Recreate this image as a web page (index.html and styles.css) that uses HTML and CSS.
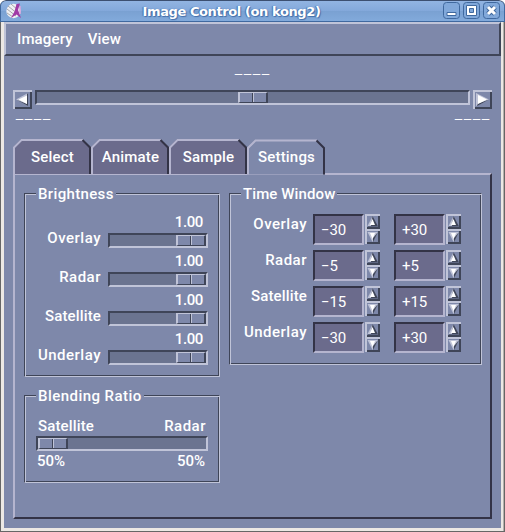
FILE: index.html
```html
<!DOCTYPE html>
<html lang="en">
<head>
<meta charset="utf-8">
<title>Image Control (on kong2)</title>
<link rel="stylesheet" href="styles.css">
</head>
<body>
<svg width="0" height="0" class="defs" aria-hidden="true">
  <symbol id="up" viewBox="0 0 15 15"><path d="M7.500 2L13 12.500H3z" fill="#3f4558"/><path d="M7.500 2L2.500 12H6z" fill="#c0c4d8"/><path d="M7.500 5L10 11H5z" fill="#fff"/></symbol>
  <symbol id="down" viewBox="0 0 15 15"><path d="M2.500 3H13L7.500 13z" fill="#c0c4d8"/><path d="M13 3L8 13V9z" fill="#3f4558"/><path d="M5 4h5L7.500 10z" fill="#fff"/></symbol>
  <symbol id="left" viewBox="0 0 19 19"><path d="M3 9.500L15 3v13z" fill="#c0c4d8"/><path d="M3 9.500L15 16V3.500h-1V14z" fill="#3f4558"/><path d="M5.500 9.500L14 5.500v8.500z" fill="#fff"/></symbol>
  <symbol id="right" viewBox="0 0 19 19"><path d="M3 3v13L16 9.500z" fill="#c0c4d8"/><path d="M4 16L16 9.500 5 13.500z" fill="#3f4558"/><path d="M5 5v9L14 9.500z" fill="#fff"/></symbol>
  <symbol id="tab" viewBox="0 0 78 35"><path class="face" d="M0 35V8L8 0h61l9 8v27z"/><path d="M1 35V8.500L8.500 1H70" fill="none" stroke="#b5b5cf" stroke-width="2"/><path d="M69.500 1l7.500 7.500V35" fill="none" stroke="#333346" stroke-width="2"/></symbol>
</svg>
<div class="window">
  <header class="titlebar">
    <svg class="logo" width="16" height="16" viewBox="0 0 16 16"><circle cx="7.500" cy="8" r="7.200" fill="#f0f0f4"/><path d="M1 6l9 7M2 3l10 8M5 1l7 6M1 10l6 4" stroke="#888" stroke-width=".7"/><path d="M10.500 1l3.500-.5-2 6.500 3 8-4.500-3.500L5 15l3.500-6.500z" fill="#a03aa6"/><path d="M14 3v8" stroke="#d9a3dc" stroke-width="1.500"/></svg>
    <h1>Image Control (on kong2)</h1>
    <div class="winbtns">
      <svg width="17" height="17" viewBox="0 0 17 17"><rect x=".5" y=".5" width="16" height="16" rx="3"/><path d="M4 10.500h9v3H4z" class="g"/></svg>
      <svg width="17" height="17" viewBox="0 0 17 17"><rect x=".5" y=".5" width="16" height="16" rx="3"/><path d="M3.500 3.500h10v10h-10zM6.500 6.500v4h4v-4z" class="g" fill-rule="evenodd"/></svg>
      <svg width="17" height="17" viewBox="0 0 17 17"><rect x=".5" y=".5" width="16" height="16" rx="3"/><path d="M5 5l7 7M12 5l-7 7" class="x1"/><path d="M5 5l7 7M12 5l-7 7" class="x2"/></svg>
    </div>
  </header>
  <main class="client">
    <nav class="menubar"><span class="imagery">Imagery</span><span class="view">View</span></nav>
    <div class="dash center">––––</div>
    <div class="scroll">
      <svg class="btn big"><use href="#left"/></svg>
      <div class="trough wide"><i class="thumb"></i></div>
      <svg class="btn big"><use href="#right"/></svg>
    </div>
    <div class="ends"><span class="dash">––––</span><span class="dash">––––</span></div>
    <div class="tabs">
      <div class="tab"><svg><use href="#tab"/></svg><span>Select</span></div>
      <div class="tab"><svg><use href="#tab"/></svg><span>Animate</span></div>
      <div class="tab"><svg><use href="#tab"/></svg><span>Sample</span></div>
      <div class="tab active"><svg><use href="#tab"/></svg><span>Settings</span></div>
    </div>
    <section class="panel">
      <div class="col">
        <div class="group brightness"><h2>Brightness</h2>
          <div class="srow"><b>Overlay</b><div><em>1.00</em><div class="trough"><i class="thumb"></i></div></div></div>
          <div class="srow"><b>Radar</b><div><em>1.00</em><div class="trough"><i class="thumb"></i></div></div></div>
          <div class="srow"><b class="tight">Satellite</b><div><em>1.00</em><div class="trough"><i class="thumb"></i></div></div></div>
          <div class="srow"><b>Underlay</b><div><em>1.00</em><div class="trough"><i class="thumb"></i></div></div></div>
        </div>
        <div class="group blending"><h2>Blending Ratio</h2>
          <div class="pair"><b class="tight">Satellite</b><b>Radar</b></div>
          <div class="trough"><i class="thumb"></i></div>
          <div class="pair pct"><span>50%</span><span>50%</span></div>
        </div>
      </div>
      <div class="group time"><h2>Time Window</h2>
        <div class="trow"><b>Overlay</b><span class="field">−30</span><span class="spin"><svg class="btn"><use href="#up"/></svg><svg class="btn"><use href="#down"/></svg></span><span class="field">+30</span><span class="spin"><svg class="btn"><use href="#up"/></svg><svg class="btn"><use href="#down"/></svg></span></div>
        <div class="trow"><b>Radar</b><span class="field">−5</span><span class="spin"><svg class="btn"><use href="#up"/></svg><svg class="btn"><use href="#down"/></svg></span><span class="field">+5</span><span class="spin"><svg class="btn"><use href="#up"/></svg><svg class="btn"><use href="#down"/></svg></span></div>
        <div class="trow"><b class="tight">Satellite</b><span class="field">−15</span><span class="spin"><svg class="btn"><use href="#up"/></svg><svg class="btn"><use href="#down"/></svg></span><span class="field">+15</span><span class="spin"><svg class="btn"><use href="#up"/></svg><svg class="btn"><use href="#down"/></svg></span></div>
        <div class="trow"><b>Underlay</b><span class="field">−30</span><span class="spin"><svg class="btn"><use href="#up"/></svg><svg class="btn"><use href="#down"/></svg></span><span class="field">+30</span><span class="spin"><svg class="btn"><use href="#up"/></svg><svg class="btn"><use href="#down"/></svg></span></div>
      </div>
    </section>
  </main>
</div>
</body>
</html>
```
FILE: styles.css
```css
* { box-sizing: border-box; }
body { margin: 0; background: #fff; color: #fff; font: 500 15px/18px Roboto, "Liberation Sans", sans-serif; overflow: hidden; }
h1, h2, b, em { margin: 0; font: inherit; }
h2, b { letter-spacing: .5px; }
b.tight { letter-spacing: .15px; }
svg { display: block; }
.defs { position: absolute; }
.window { width: 505px; height: 532px; background: linear-gradient(90deg, #666 1px, #ece8e4 1px, #ece8e4 503px, #b4b0ac 503px, #b4b0ac 504px, #666 504px); border-bottom: 1px solid #666; border-radius: 6px 6px 0 0; overflow: hidden; }
.titlebar { height: 22px; display: flex; align-items: flex-start; background: linear-gradient(#92b4e2, #83a8da 50%, #7aa1d2 51%, #82aadb); border: 1px solid #40699f; border-top-color: #3c4f70; border-radius: 6px 6px 0 0; padding: 1px 4px 0 5px; }
.logo { margin-top: 1px; }
h1 { flex: 1; text-align: center; padding-right: 2px; font: bold 13px/19px "DejaVu Sans", sans-serif; letter-spacing: -.4px; text-shadow: 1px 1px 1px #446ea8, -1px 0 1px #446ea8; }
.winbtns { display: flex; gap: 3px; }
.winbtns rect { fill: #81a8da; stroke: #40699f; }
.winbtns .g { fill: #fff; stroke: #40699f; }
.x1 { stroke: #40699f; stroke-width: 5; }
.x2 { stroke: #fff; stroke-width: 3; }
.client { width: 497px; height: 506px; margin-left: 4px; background: #7e88aa; }
.menubar { height: 34px; border: 2px solid; border-color: #c0c4d8 #3f4558 #3f4558 #c0c4d8; display: flex; gap: 15px; padding: 6px 11px; letter-spacing: .15px; }
.dash { font: 12.6px/10px "Liberation Sans", sans-serif; letter-spacing: 2px; -webkit-text-stroke: .3px #fff; }
.center { margin: 13px 0 0 231px; height: 21px; }
.scroll { display: flex; gap: 3px; margin-left: 9px; height: 19px; }
.btn { width: 15px; height: 15px; background: #7e88aa; box-shadow: inset 2px 2px #c0c4d8, inset -2px -2px #3f4558; }
.btn.big { width: 19px; height: 19px; }
.trough { height: 15px; background: #6b7490; border: 2px solid; border-color: #3f4558 #c0c4d8 #c0c4d8 #3f4558; display: flex; }
.wide { width: 435px; padding-left: 201px; }
.thumb { width: 30px; height: 11px; background: linear-gradient(90deg, transparent 12px, #3f4558 12px, #3f4558 13px, #c0c4d8 13px, #c0c4d8 14px, transparent 14px) #7e88aa; border: 1px solid; border-width: 1px 2px 1px 2px; border-color: #c0c4d8 #3f4558 #3f4558 #c0c4d8; }
.ends { display: flex; justify-content: space-between; padding: 5px 10px 0 12px; height: 30px; }
.tabs { display: flex; margin-left: 9px; height: 34px; letter-spacing: .2px; }
.tab { width: 78px; height: 34px; display: grid; text-align: center; fill: #6b6b8c; }
.tab svg, .tab span { grid-area: 1 / 1; }
.tab svg { width: 78px; height: 35px; }
.tab span { padding: 9px 0 0 1px; }
.tab.active { fill: #7e88aa; height: 36px; z-index: 1; }
.tab.active svg { height: 36px; }
.panel { width: 479px; height: 346px; margin-left: 9px; border: 2px solid; border-color: #b5b5cf #333346 #333346 #b5b5cf; display: flex; gap: 9px; padding: 18px 8px 18px 9px; }
.group { border: 1px solid; border-color: #3f4558 #c0c4d8 #c0c4d8 #3f4558; box-shadow: inset 1px 1px #c0c4d8, inset -1px -1px #3f4558; }
.group h2 { width: max-content; height: 18px; margin: -9px 0 0 11px; padding: 0 2px; background: #7e88aa; letter-spacing: .35px; }
.group.blending h2 { letter-spacing: .45px; }
.group.time h2 { letter-spacing: .1px; }
.col { width: 196px; display: grid; gap: 18px; align-content: start; }
.brightness { height: 184px; }
.srow { height: 39px; display: flex; justify-content: flex-end; gap: 7px; padding-right: 11px; position: relative; top: 10px; }
.srow b { padding-top: 16px; }
.srow em { display: block; text-align: right; padding-right: 5px; height: 20px; letter-spacing: -.4px; }
.srow .trough { width: 100px; justify-content: flex-end; }
.blending { height: 88px; }
.pair { display: flex; justify-content: space-between; padding: 0 13px; height: 24px; margin-top: 12px; }
.blending .trough { margin: -5px 11px 0; }
.pct { margin-top: 1px; padding: 0 14px 0 12px; }
.time { width: 253px; height: 172px; }
.trow { display: flex; height: 36px; position: relative; top: 11px; }
.trow b { width: 77px; text-align: right; margin-right: 6px; padding-top: 1px; }
.field { width: 51px; height: 31px; background: #6b6b8c; border: 2px solid; border-color: #333346 #b5b5cf #b5b5cf #333346; padding: 5px 0 0 6px; font-weight: 400; margin-right: 1px; letter-spacing: -.1px; }
.spin { width: 15px; margin-right: 14px; }
```
